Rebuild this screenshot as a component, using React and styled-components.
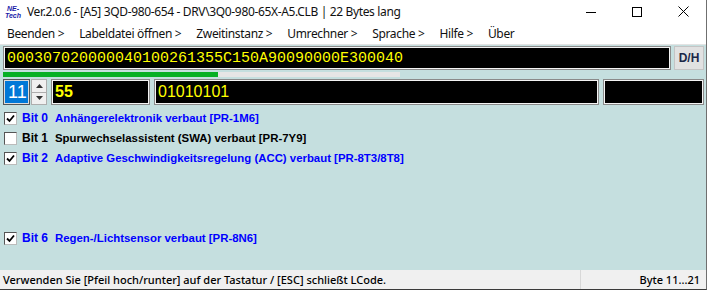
import React from 'react'
import styled, { createGlobalStyle } from 'styled-components'

const panelBg = '#c5dfdf'
const uiFont = '"Noto Sans", "Liberation Sans", sans-serif'
const lcdYellow = '#ffff00'

const GlobalStyle = createGlobalStyle`
	html, body {
		margin: 0;
		padding: 0;
		overflow: hidden;
		background: #ffffff;
	}
`

const Window = styled.div`
	width: 707px;
	height: 290px;
	display: flex;
	flex-direction: column;
	box-sizing: border-box;
	border-right: 1px solid #6f6f6f;
	border-bottom: 1px solid #3a3a3a;
	overflow: hidden;
`

const TitleBar = styled.div`
	height: 23px;
	display: flex;
	align-items: center;
	background: #ffffff;
	font-family: ${uiFont};
	font-size: 12px;
	letter-spacing: -0.35px;
	color: #111;
`

const Logo = styled.div`
	width: 20px;
	margin: 0 4px 0 3px;
	display: flex;
	flex-direction: column;
	align-items: center;
	font-family: "Liberation Sans", sans-serif;
	font-weight: bold;
	font-style: italic;
	font-size: 7px;
	letter-spacing: 0;
	color: #1a1aa8;
	line-height: 7px;
`

const Title = styled.div`
	flex: 1;
	white-space: nowrap;
`

const WinButton = styled.div`
	width: 46px;
	height: 23px;
	display: flex;
	align-items: center;
	justify-content: center;
`

const MenuBar = styled.div`
	height: 21px;
	display: flex;
	align-items: center;
	background: #ffffff;
	font-family: ${uiFont};
	font-size: 12px;
	letter-spacing: -0.35px;
	color: #111;
	border-bottom: 1px solid #e3e3e3;
`

const MenuItem = styled.div`
	padding: 0 8px 0 7px;
	white-space: nowrap;
`

const Panel = styled.div`
	flex: 1;
	background: ${panelBg};
	display: flex;
	flex-direction: column;
	padding: 1px 2px 0 3px;
`

const HexRow = styled.div`
	display: flex;
	gap: 3px;
	height: 24px;
`

const LcdBox = styled.div`
	box-sizing: border-box;
	height: 100%;
	background: #000;
	border: 1px solid #8a8a8a;
	box-shadow: inset 0 0 0 1px #f4f4f4;
	display: flex;
	align-items: center;
	padding-left: 3px;
	flex: ${p => p.$grow ? 1 : 'none'};
	width: ${p => p.$w ? p.$w + 'px' : 'auto'};
	color: ${lcdYellow};
	overflow: hidden;
	white-space: nowrap;
`

const HexText = styled.span`
	font-family: "Liberation Mono", "DejaVu Sans Mono", monospace;
	font-size: 15px;
`

const DHButton = styled.div`
	width: 30px;
	box-sizing: border-box;
	background: #e1e1e1;
	border: 1px solid #c4c4c4;
	display: flex;
	align-items: center;
	justify-content: center;
	font-family: "Liberation Sans", Arial, sans-serif;
	font-weight: bold;
	font-size: 12px;
	color: #1b2748;
`

const Progress = styled.div`
	margin-top: 2px;
	width: 397px;
	height: 5px;
	background: #e6e6e6;
`

const ProgressFill = styled.div`
	height: 100%;
	background: #06b025;
`

const ValueRow = styled.div`
	display: flex;
	align-items: center;
	height: 26px;
	margin-top: 2px;
	gap: 4px;
`

const Spinner = styled.div`
	display: flex;
	height: 26px;
	gap: 1px;
`

const SpinValue = styled.div`
	width: 27px;
	box-sizing: border-box;
	border: 1px solid #555;
	box-shadow: inset 0 0 0 1px #dcdcdc;
	background: #0078d7;
	display: flex;
	align-items: center;
	padding-left: 4px;
	font-family: "Liberation Sans", Arial, sans-serif;
	font-size: 18px;
	color: #fff;
`

const SpinButtons = styled.div`
	width: 16px;
	display: flex;
	flex-direction: column;
	border: 1px solid #adadad;
	box-sizing: border-box;
`

const SpinButton = styled.div`
	flex: 1;
	background: #f0f0f0;
	display: flex;
	align-items: center;
	justify-content: center;
	& + & { border-top: 1px solid #adadad; }
`

const ValueText = styled.span`
	font-family: "Liberation Sans", Arial, sans-serif;
	font-size: 16px;
	font-weight: ${p => p.$bold ? 'bold' : 'normal'};
`

const BitList = styled.div`
	margin-top: 3px;
	display: flex;
	flex-direction: column;
`

const BitRow = styled.div`
	height: 20px;
	display: flex;
	align-items: center;
	font-family: "Liberation Sans", Arial, sans-serif;
	font-weight: bold;
	font-size: 11.4px;
	color: ${p => p.$on ? '#0000ff' : '#000'};
`

const Check = styled.div`
	width: 13px;
	height: 13px;
	box-sizing: border-box;
	margin: 0 5px 0 1px;
	background: #fff;
	border: 1px solid #555;
	border-right-color: #bbb;
	border-bottom-color: #bbb;
	display: flex;
	align-items: center;
	justify-content: center;
`

const BitLabel = styled.span`
	width: 33px;
	font-size: 12px;
`

const StatusBar = styled.div`
	height: 19px;
	display: flex;
	align-items: center;
	background: #f0f0f0;
	font-family: ${uiFont};
	font-size: 11px;
	font-weight: 500;
	color: #000;
`

const StatusText = styled.div`
	flex: 1;
	padding-left: 3px;
	white-space: nowrap;
`

const StatusRight = styled.div`
	width: 126px;
	height: 100%;
	border-left: 1px solid #d8d8d8;
	display: flex;
	align-items: center;
	justify-content: flex-end;
	padding-right: 6px;
	box-sizing: border-box;
`

const bits = [
	{ n: 0, on: true, text: 'Anhängerelektronik verbaut [PR-1M6]' },
	{ n: 1, on: false, text: 'Spurwechselassistent (SWA) verbaut [PR-7Y9]' },
	{ n: 2, on: true, text: 'Adaptive Geschwindigkeitsregelung (ACC) verbaut [PR-8T3/8T8]' },
	null,
	null,
	null,
	{ n: 6, on: true, text: 'Regen-/Lichtsensor verbaut [PR-8N6]' },
]

const menu = ['Beenden >', 'Labeldatei öffnen >', 'Zweitinstanz >', 'Umrechner >', 'Sprache >', 'Hilfe >', 'Über']

const Tick = () => (
	<svg width="9" height="9" viewBox="0 0 9 9">
		<path d="M1 4.5 L3.5 7 L8 1.5" fill="none" stroke="#000" strokeWidth="1.8" />
	</svg>
)

export default function App() {
	return (
		<Window>
			<GlobalStyle />
			<TitleBar>
				<Logo><span>NE-</span><span>Tech</span></Logo>
				<Title>Ver.2.0.6 - [A5] 3QD-980-654 - DRV\3Q0-980-65X-A5.CLB | 22 Bytes lang</Title>
				<WinButton>
					<svg width="10" height="10" viewBox="0 0 10 10"><path d="M0 5.5 H10" stroke="#000" strokeWidth="1" /></svg>
				</WinButton>
				<WinButton>
					<svg width="10" height="10" viewBox="0 0 10 10"><rect x="0.5" y="0.5" width="9" height="9" fill="none" stroke="#000" strokeWidth="1" /></svg>
				</WinButton>
				<WinButton>
					<svg width="11" height="11" viewBox="0 0 11 11"><path d="M0.5 0.5 L10.5 10.5 M10.5 0.5 L0.5 10.5" stroke="#000" strokeWidth="1" /></svg>
				</WinButton>
			</TitleBar>
			<MenuBar>
				{menu.map(m => <MenuItem key={m}>{m}</MenuItem>)}
			</MenuBar>
			<Panel>
				<HexRow>
					<LcdBox $grow>
						<HexText>000307020000040100261355C150A90090000E300040</HexText>
					</LcdBox>
					<DHButton>D/H</DHButton>
				</HexRow>
				<Progress>
					<ProgressFill style={{ width: `${(215 / 397) * 100}%` }} />
				</Progress>
				<ValueRow>
					<Spinner>
						<SpinValue>11</SpinValue>
						<SpinButtons>
							<SpinButton>
								<svg width="7" height="4" viewBox="0 0 7 4"><path d="M0 4 L3.5 0 L7 4 Z" fill="#333" /></svg>
							</SpinButton>
							<SpinButton>
								<svg width="7" height="4" viewBox="0 0 7 4"><path d="M0 0 L3.5 4 L7 0 Z" fill="#333" /></svg>
							</SpinButton>
						</SpinButtons>
					</Spinner>
					<LcdBox $w={99}><ValueText $bold>55</ValueText></LcdBox>
					<LcdBox $grow><ValueText>01010101</ValueText></LcdBox>
					<LcdBox $w={101} />
				</ValueRow>
				<BitList>
					{bits.map((b, i) => b ? (
						<BitRow key={i} $on={b.on}>
							<Check>{b.on && <Tick />}</Check>
							<BitLabel>Bit {b.n}</BitLabel>
							<span>{b.text}</span>
						</BitRow>
					) : <BitRow key={i} />)}
				</BitList>
			</Panel>
			<StatusBar>
				<StatusText>Verwenden Sie [Pfeil hoch/runter] auf der Tastatur / [ESC] schließt LCode.</StatusText>
				<StatusRight>Byte 11...21</StatusRight>
			</StatusBar>
		</Window>
	)
}
